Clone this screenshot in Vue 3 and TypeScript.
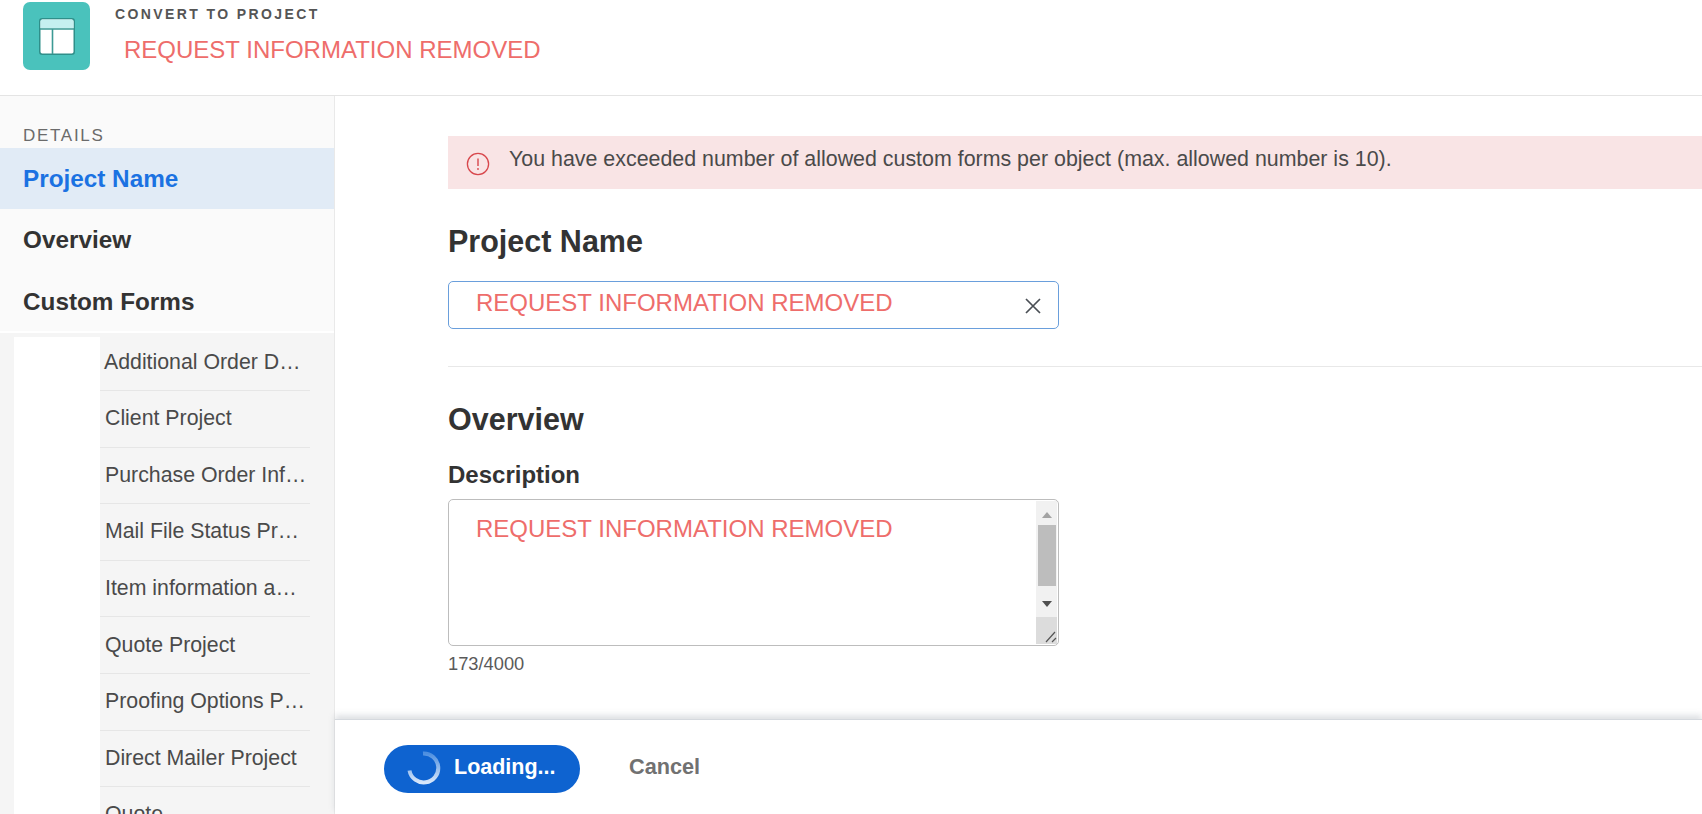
<script setup lang="ts">
const forms: string[] = [
  'Additional Order D…',
  'Client Project',
  'Purchase Order Inf…',
  'Mail File Status Pr…',
  'Item information a…',
  'Quote Project',
  'Proofing Options P…',
  'Direct Mailer Project',
  'Quote',
]
</script>

<template>
  <div class="page">
    <header class="head">
      <div class="logo">
        <svg width="36" height="37" viewBox="0 0 36 37">
          <rect x="0.75" y="0.75" width="34.5" height="35.5" rx="2.5" fill="#fff" stroke="#2f8f8a" stroke-width="1.5" />
          <path d="M1.5 3.5a2 2 0 0 1 2-2h29a2 2 0 0 1 2 2v7h-33z" fill="#c5f0f0" />
          <path d="M1 11h34M13.5 11v25" stroke="#3d9a95" stroke-width="1.6" fill="none" />
        </svg>
      </div>
      <div class="titles">
        <div class="eyebrow">CONVERT TO PROJECT</div>
        <div class="title">REQUEST INFORMATION REMOVED</div>
      </div>
    </header>
    <div class="body">
      <aside class="side">
        <div class="side-top">
          <div class="section">DETAILS</div>
          <div class="nav active">Project Name</div>
          <div class="nav over">Overview</div>
          <div class="nav">Custom Forms</div>
        </div>
        <div class="sub">
          <div class="blank"></div>
          <ul class="forms">
            <li v-for="(f, i) in forms" :key="f" class="form" :class="{ first: i === 0 }"><span>{{ f }}</span></li>
          </ul>
        </div>
      </aside>
      <div class="right">
        <main class="main">
          <div class="alert">
            <svg class="alert-icon" width="24" height="24" viewBox="0 0 24 24">
              <circle cx="12" cy="12" r="10.6" fill="none" stroke="#d8474c" stroke-width="1.3" />
              <path d="M12 6.5v7.5" stroke="#d8474c" stroke-width="1.4" fill="none" />
              <circle cx="12" cy="17" r="0.9" fill="#d8474c" />
            </svg>
            <span>You have exceeded number of allowed custom forms per object (max. allowed number is 10).</span>
          </div>
          <h2 class="h-name">Project Name</h2>
          <div class="input">
            <span class="red">REQUEST INFORMATION REMOVED</span>
            <svg class="x" width="18" height="18" viewBox="0 0 18 18">
              <path d="M2 2l14 14M16 2L2 16" stroke="#4a4f55" stroke-width="1.7" fill="none" />
            </svg>
          </div>
          <hr class="rule" />
          <h2 class="h-over">Overview</h2>
          <div class="label">Description</div>
          <div class="area">
            <span class="red">REQUEST INFORMATION REMOVED</span>
            <div class="bar">
              <div class="arrow up"></div>
              <div class="thumb"></div>
              <div class="arrow down"></div>
              <div class="grip">
                <svg width="19" height="27" viewBox="0 0 19 27">
                  <path d="M8 25L17 15M14 25L18 21" stroke="#555" stroke-width="1.2" fill="none" />
                </svg>
              </div>
            </div>
          </div>
          <div class="count">173/4000</div>
        </main>
        <footer class="foot">
          <button class="load">
            <svg width="36" height="36" viewBox="0 0 36 36">
              <defs>
                <linearGradient id="sp" x1="0" y1="0" x2="0" y2="1">
                  <stop offset="0" stop-color="#4d8fe0" />
                  <stop offset="1" stop-color="#d8e7fa" />
                </linearGradient>
              </defs>
              <path d="M17 3.5a14.5 14.5 0 1 1-13.5 17" fill="none" stroke="url(#sp)" stroke-width="4" />
            </svg>
            <span class="load-text">Loading...</span>
          </button>
          <span class="cancel">Cancel</span>
        </footer>
      </div>
    </div>
  </div>
</template>

<style>
html, body { margin: 0; background: #fff; overflow: hidden; }
</style>

<style scoped>
.page {
  width: 1702px;
  height: 814px;
  display: flex;
  flex-direction: column;
  overflow: hidden;
  font-family: "Liberation Sans", Arial, sans-serif;
  color: #2e2e2e;
  background: #fff;
}
.head {
  height: 96px;
  flex: none;
  box-sizing: border-box;
  border-bottom: 1px solid #e4e4e4;
  display: flex;
  align-items: flex-start;
  padding: 2px 0 0 23px;
}
.logo {
  width: 67px;
  height: 68px;
  flex: none;
  border-radius: 7px;
  background: #4ac2bc;
  display: flex;
  align-items: center;
  justify-content: center;
}
.titles { margin-left: 25px; }
.eyebrow {
  font-size: 14px;
  line-height: 16px;
  margin-top: 4px;
  font-weight: 700;
  letter-spacing: 2.4px;
  color: #555;
  white-space: nowrap;
}
.title {
  margin: 13px 0 0 9px;
  font-size: 24px;
  line-height: 30px;
  color: #ee6d6b;
  white-space: nowrap;
}
.body { flex: 1; min-height: 0; display: flex; }
.side {
  width: 335px;
  flex: none;
  box-sizing: border-box;
  border-right: 1px solid #e9e9e9;
  background: #f5f5f5;
  display: flex;
  flex-direction: column;
  overflow: hidden;
}
.side-top {
  flex: none;
  height: 237px;
  box-sizing: border-box;
  background: #fafafa;
  border-bottom: 2px solid #fff;
  padding-top: 31px;
}
.section {
  padding-left: 23px;
  font-size: 17px;
  line-height: 18px;
  letter-spacing: 1.7px;
  color: #6b6b6b;
}
.nav {
  height: 61px;
  display: flex;
  align-items: center;
  padding-left: 23px;
  font-size: 24.3px;
  font-weight: 700;
  color: #333;
}
.nav.active {
  height: 61px;
  margin-top: 3px;
  background: #e1ebf6;
  color: #1b72e2;
}
.nav.over { height: 62px; }
.sub { flex: 1; min-height: 0; display: flex; padding: 4px 0 0 14px; }
.blank { width: 86px; flex: none; background: #fff; }
.forms {
  list-style: none;
  margin: 0;
  padding: 0;
  width: 210px;
  flex: none;
}
.form {
  height: 56.6px;
  box-sizing: border-box;
  border-bottom: 1px solid #e6e6e6;
  display: flex;
  align-items: center;
  padding-left: 5px;
  font-size: 21.3px;
  color: #4a4a4a;
}
.form.first { height: 54px; padding: 0 0 2px 4px; }
.form span { white-space: nowrap; }
.right {
  flex: 1;
  min-width: 0;
  display: flex;
  flex-direction: column;
}
.main {
  flex: 1;
  min-height: 0;
  box-sizing: border-box;
  padding: 40px 0 0 113px;
  overflow: hidden;
}
.alert {
  height: 53px;
  box-sizing: border-box;
  background: #f9e4e5;
  display: flex;
  align-items: flex-start;
  padding: 11px 0 0 18px;
  font-size: 21.4px;
  line-height: 24px;
  color: #4a4a4a;
  white-space: nowrap;
}
.alert-icon { flex: none; margin: 5px 19px 0 0; }
.h-name {
  margin: 36px 0 0;
  font-size: 30.5px;
  line-height: 32px;
  font-weight: 700;
  color: #333;
}
.input {
  margin-top: 24px;
  width: 611px;
  height: 48px;
  box-sizing: border-box;
  border: 1.5px solid #6a9fdc;
  border-radius: 5px;
  display: flex;
  align-items: flex-start;
  justify-content: space-between;
  padding: 7px 16px 0 27px;
}
.x { margin-top: 8px; }
.red {
  font-size: 24px;
  line-height: 28px;
  color: #ee6d6b;
  white-space: nowrap;
}
.rule {
  margin: 37px 0 0;
  border: 0;
  border-top: 1px solid #e8e8e8;
}
.h-over {
  margin: 36px 0 0;
  font-size: 30.5px;
  line-height: 32px;
  font-weight: 700;
  color: #333;
}
.label {
  margin-top: 27px;
  font-size: 24px;
  line-height: 26px;
  font-weight: 700;
  color: #333;
}
.area {
  margin-top: 11px;
  width: 611px;
  height: 147px;
  box-sizing: border-box;
  border: 1.5px solid #bdbdbd;
  border-radius: 5px;
  position: relative;
  padding: 15px 0 0 27px;
  overflow: hidden;
}
.bar {
  position: absolute;
  top: 1px;
  right: 1px;
  bottom: 1px;
  width: 21px;
  background: #f1f1f1;
  display: flex;
  flex-direction: column;
  align-items: center;
}
.arrow {
  width: 0;
  height: 0;
  border-left: 5px solid transparent;
  border-right: 5px solid transparent;
  flex: none;
}
.arrow.up { border-bottom: 6px solid #a3a3a3; margin-top: 11px; }
.thumb { width: 18px; height: 61px; background: #bdbdbd; margin-top: 7px; flex: none; }
.arrow.down { border-top: 6px solid #505050; margin-top: 15px; }
.grip {
  margin-top: auto;
  width: 21px;
  height: 27px;
  background: #dcdcdc;
  display: flex;
  justify-content: flex-end;
}
.count {
  margin-top: 8px;
  font-size: 18.3px;
  line-height: 20px;
  color: #5a5a5a;
}
.foot {
  height: 95px;
  flex: none;
  box-sizing: border-box;
  border-top: 1px solid #d5d9de;
  box-shadow: 0 -4px 6px rgba(150, 155, 165, 0.3);
  background: #fff;
  display: flex;
  align-items: flex-start;
  padding: 25px 0 0 49px;
  position: relative;
}
.load {
  width: 196px;
  height: 48px;
  border: 0;
  border-radius: 25px;
  background: #0e63d0;
  color: #fff;
  font-family: inherit;
  font-size: 21.5px;
  font-weight: 700;
  display: flex;
  align-items: center;
  gap: 12px;
  padding: 0 0 0 22px;
}
.load svg { margin-bottom: 2px; }
.load-text { margin-bottom: 3px; }
.cancel {
  margin: 10px 0 0 49px;
  font-size: 21.7px;
  line-height: 24px;
  font-weight: 700;
  color: #717171;
}
</style>
